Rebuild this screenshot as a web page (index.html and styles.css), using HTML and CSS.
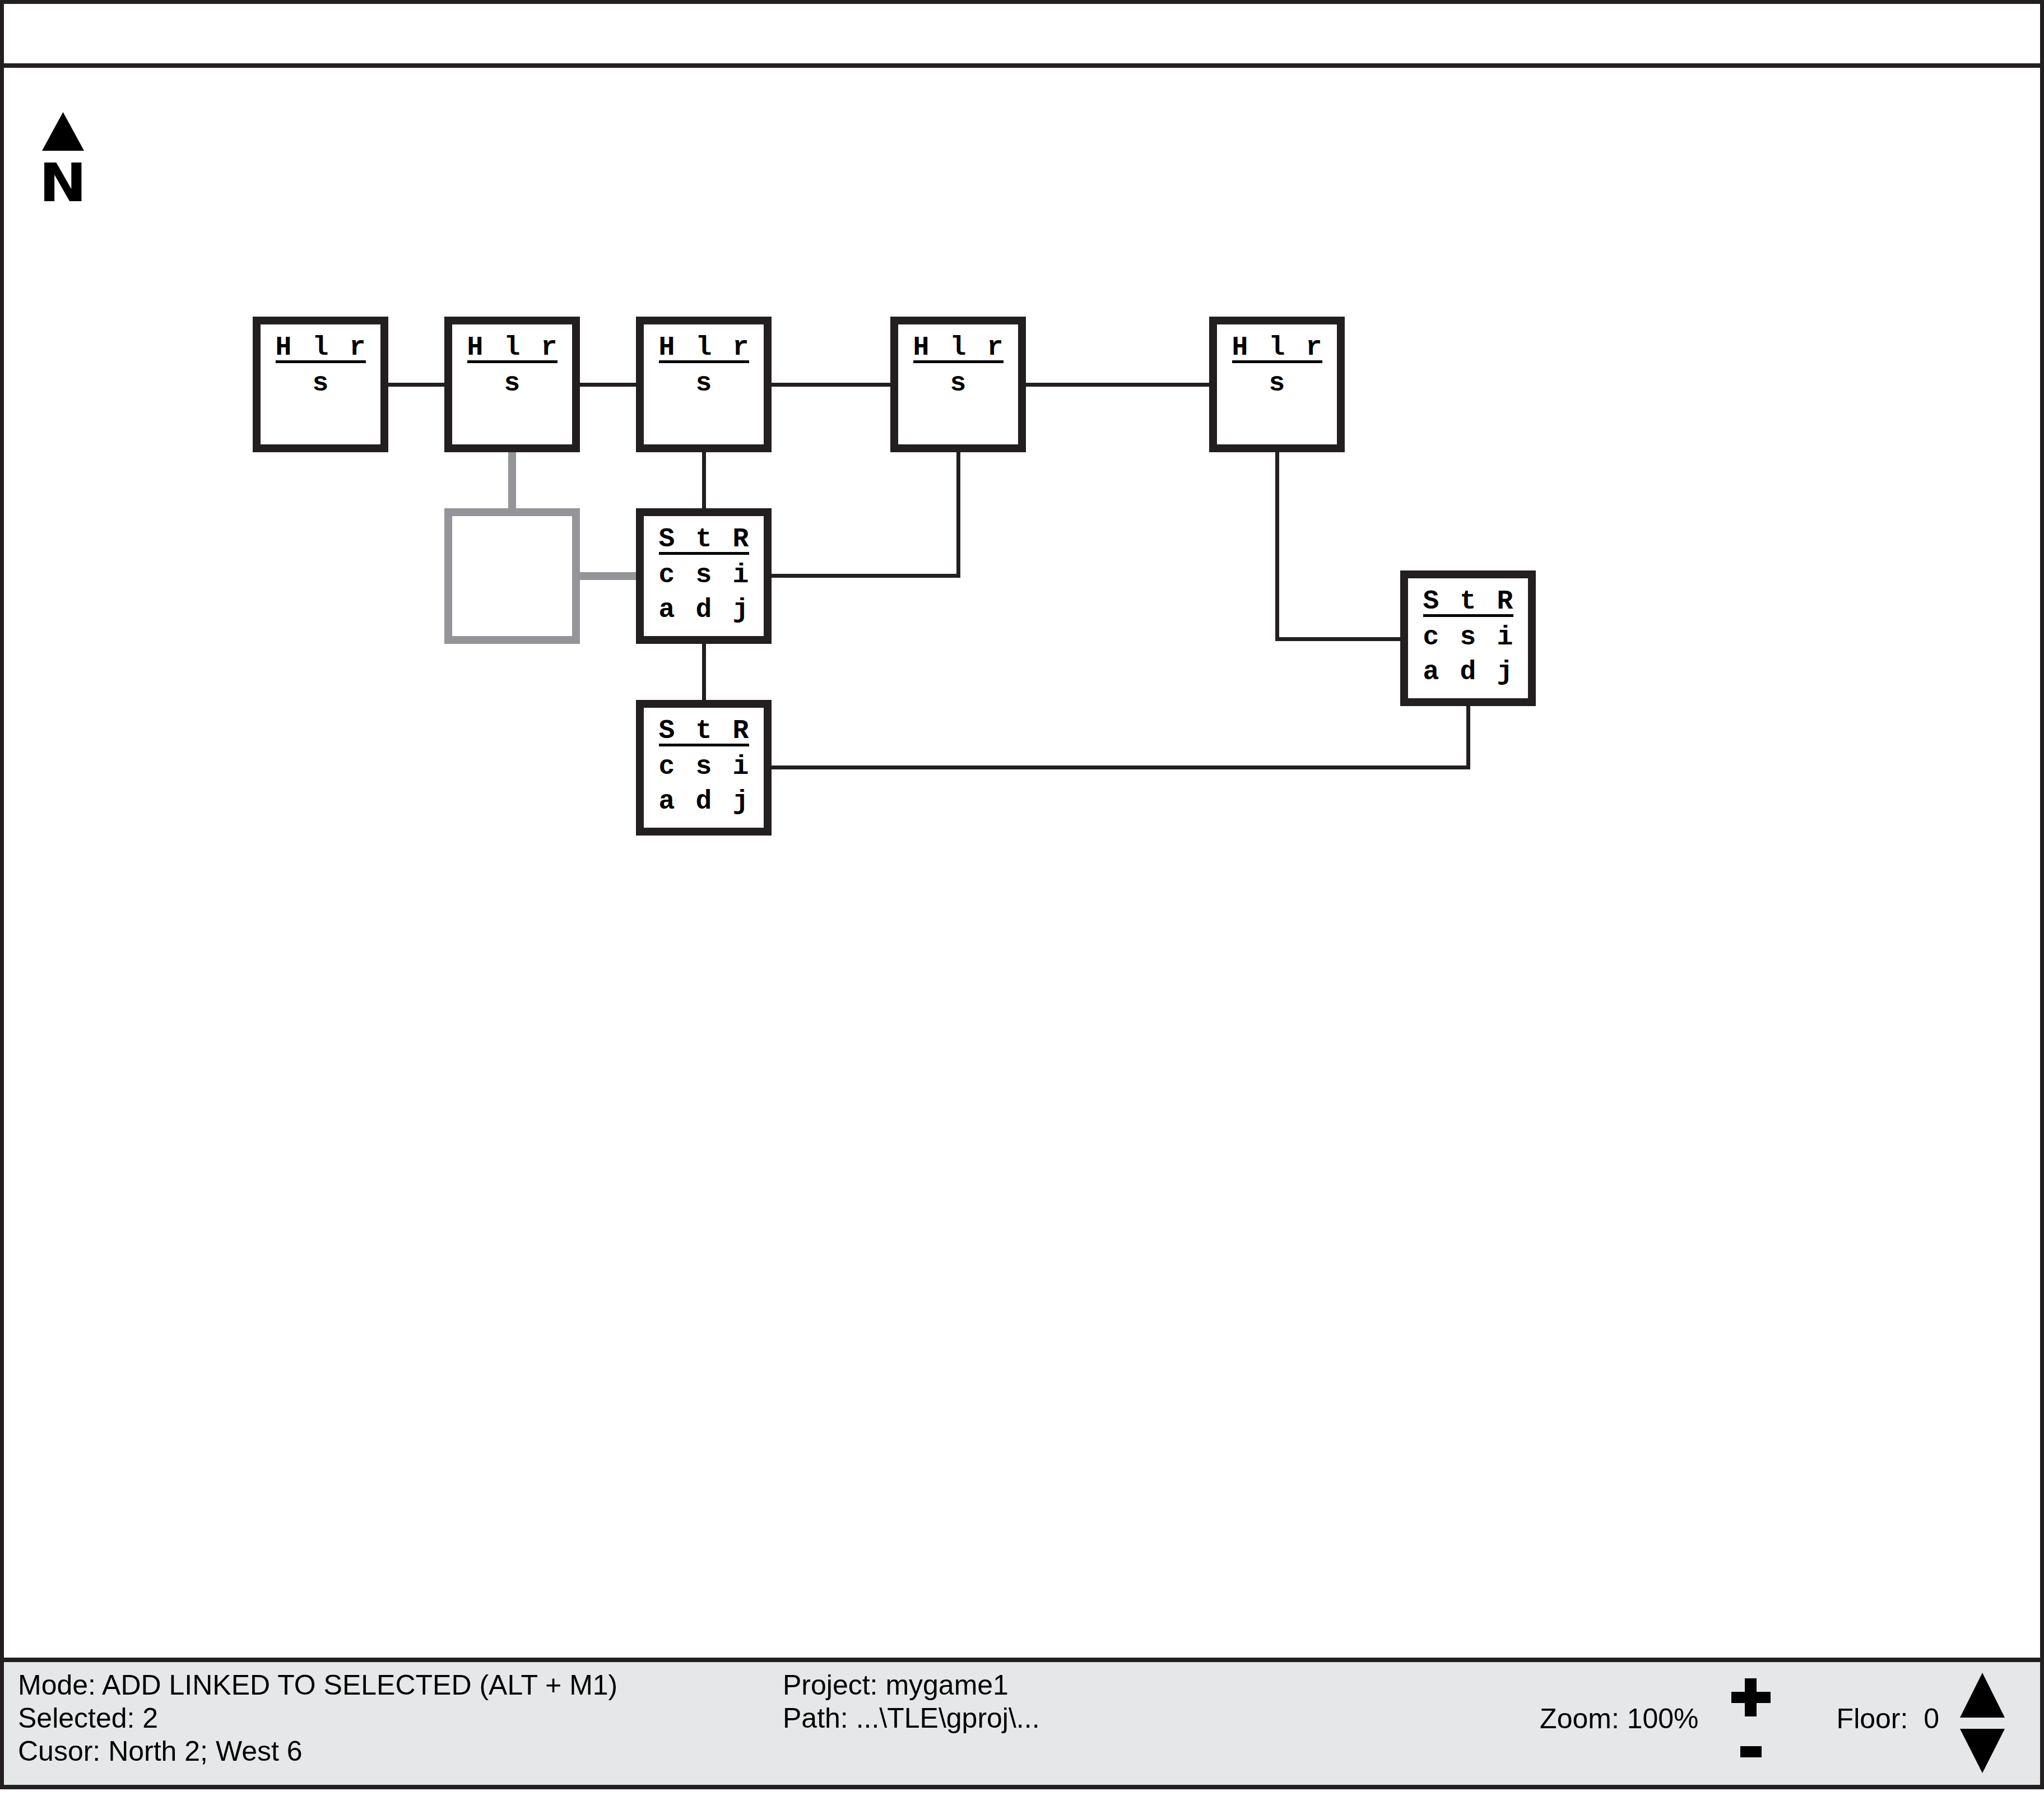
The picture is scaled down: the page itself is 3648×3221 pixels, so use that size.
FILE: index.html
```html
<!DOCTYPE html>
<html>
<head>
<meta charset="utf-8">
<title>Map editor</title>
<link rel="stylesheet" href="styles.css">
</head>
<body>
<div class="frame">
  <header class="topbar"></header>
  <main class="canvas">
    <div class="compass">
      <svg class="compass-arrow" width="75" height="69" viewBox="0 0 75 69"><polygon points="37.5,0 75,69 0,69"/></svg>
      <div class="compass-n">N</div>
    </div>

    <svg class="links" viewBox="0 0 3634 2837" preserveAspectRatio="none">
      <g class="link">
        <path d="M686 565.5H786"/>
        <path d="M1028 565.5H1128"/>
        <path d="M1370 565.5H1582"/>
        <path d="M1824 565.5H2151"/>
        <path d="M1249.5 686V786"/>
        <path d="M1370 906.5H1703.5V686"/>
        <path d="M2272.5 686V1019.5H2492"/>
        <path d="M1249.5 1028V1128"/>
        <path d="M1370 1248.5H2613.5V1139"/>
      </g>
      <g class="link link-ghost">
        <path d="M907 686V786"/>
        <path d="M1028 907H1128"/>
      </g>
    </svg>

    <div class="node" style="left:444px;top:444px">
      <div class="node-head"><span>H</span><span>l</span><span>r</span></div>
      <div class="node-row"><span></span><span>s</span><span></span></div>
    </div>
    <div class="node" style="left:786px;top:444px">
      <div class="node-head"><span>H</span><span>l</span><span>r</span></div>
      <div class="node-row"><span></span><span>s</span><span></span></div>
    </div>
    <div class="node" style="left:1128px;top:444px">
      <div class="node-head"><span>H</span><span>l</span><span>r</span></div>
      <div class="node-row"><span></span><span>s</span><span></span></div>
    </div>
    <div class="node" style="left:1582px;top:444px">
      <div class="node-head"><span>H</span><span>l</span><span>r</span></div>
      <div class="node-row"><span></span><span>s</span><span></span></div>
    </div>
    <div class="node" style="left:2151px;top:444px">
      <div class="node-head"><span>H</span><span>l</span><span>r</span></div>
      <div class="node-row"><span></span><span>s</span><span></span></div>
    </div>

    <div class="node node-ghost" style="left:786px;top:786px"></div>

    <div class="node" style="left:1128px;top:786px">
      <div class="node-head"><span>S</span><span>t</span><span>R</span></div>
      <div class="node-row"><span>c</span><span>s</span><span>i</span></div>
      <div class="node-row"><span>a</span><span>d</span><span>j</span></div>
    </div>
    <div class="node" style="left:1128px;top:1128px">
      <div class="node-head"><span>S</span><span>t</span><span>R</span></div>
      <div class="node-row"><span>c</span><span>s</span><span>i</span></div>
      <div class="node-row"><span>a</span><span>d</span><span>j</span></div>
    </div>
    <div class="node" style="left:2492px;top:897px">
      <div class="node-head"><span>S</span><span>t</span><span>R</span></div>
      <div class="node-row"><span>c</span><span>s</span><span>i</span></div>
      <div class="node-row"><span>a</span><span>d</span><span>j</span></div>
    </div>
  </main>

  <footer class="status">
    <div class="status-info">
      <div>Mode: ADD LINKED TO SELECTED (ALT + M1)</div>
      <div>Selected: 2</div>
      <div>Cusor: North 2; West 6</div>
    </div>
    <div class="status-project">
      <div>Project: mygame1</div>
      <div>Path: ...\TLE\gproj\...</div>
    </div>
    <div class="status-label status-zoom">Zoom: 100%</div>
    <div class="zoom-ctrl">
      <svg class="zoom-in" width="70" height="68" viewBox="0 0 70 68"><path d="M24 0H45V24H70V44H45V68H24V44H0V24H24Z"/></svg>
      <svg class="zoom-out" width="38" height="20" viewBox="0 0 38 20"><rect width="38" height="20"/></svg>
    </div>
    <div class="status-label status-floor">Floor:&nbsp; 0</div>
    <div class="floor-ctrl">
      <svg width="80" height="80" viewBox="0 0 80 80"><polygon points="40,0 80,80 0,80"/></svg>
      <svg width="80" height="79" viewBox="0 0 80 79"><polygon points="0,0 80,0 40,79"/></svg>
    </div>
  </footer>
</div>
</body>
</html>
```

FILE: styles.css
```css
* {
  box-sizing: border-box;
}

html, body {
  margin: 0;
  padding: 0;
  background: #ffffff;
}

body {
  font-family: "Liberation Sans", Arial, sans-serif;
  color: #000;
}

.frame {
  width: 3648px;
  height: 3193px;
  display: flex;
  flex-direction: column;
  border-style: solid;
  border-color: #231f20;
  border-width: 7px 7px 8px 7px;
  background: #fff;
}

.topbar {
  height: 114px;
  flex: none;
  border-bottom: 8px solid #231f20;
  background: #fff;
}

.canvas {
  position: relative;
  flex: 1;
  overflow: hidden;
  background: #fff;
}

/* compass */
.compass {
  position: absolute;
  left: 66px;
  top: 79px;
  display: flex;
  flex-direction: column;
  align-items: center;
}

.compass-arrow {
  display: block;
  fill: #000;
}

.compass-n {
  margin-top: 11px;
  font-family: "DejaVu Sans", sans-serif;
  font-weight: bold;
  font-size: 94px;
  line-height: 94px;
  color: #000;
  transform: scaleX(1.08);
}

/* links */
.links {
  position: absolute;
  left: 0;
  top: 0;
  width: 3634px;
  height: 2837px;
}

.link path {
  fill: none;
  stroke: #231f20;
  stroke-width: 7;
  stroke-linejoin: miter;
  stroke-linecap: butt;
}

.link-ghost path {
  stroke: #939598;
  stroke-width: 14;
}

/* nodes */
.node {
  position: absolute;
  width: 242px;
  height: 242px;
  border: 14px solid #231f20;
  background: #fff;
  padding-top: 18px;
  font-family: "Liberation Mono", "Courier New", monospace;
  font-weight: bold;
  font-size: 48px;
  color: #000;
}

.node-ghost {
  border-color: #939598;
}

.node-head {
  display: grid;
  grid-template-columns: repeat(3, 66px);
  justify-content: center;
  width: 161px;
  margin: 0 auto;
  line-height: 46px;
  border-bottom: 5px solid #000;
  text-align: center;
}

.node-row {
  display: grid;
  grid-template-columns: repeat(3, 66px);
  justify-content: center;
  line-height: 62px;
  text-align: center;
}

.node-head + .node-row {
  margin-top: 5px;
}

/* status bar */
.status {
  flex: none;
  height: 227px;
  border-top: 8px solid #231f20;
  background: #e6e7e8;
  display: flex;
  align-items: flex-start;
  padding: 12px 63px 0 25px;
  font-size: 50px;
  line-height: 59px;
  white-space: nowrap;
}

.status-info {
  width: 1365px;
  flex: none;
}

.status-project {
  flex: 1;
}

.status-label {
  margin-top: 60px;
}

.zoom-ctrl {
  margin-left: 58px;
  margin-top: 17px;
  width: 70px;
  display: flex;
  flex-direction: column;
  align-items: center;
  gap: 53px;
}

.zoom-ctrl svg,
.floor-ctrl svg {
  display: block;
  fill: #000;
}

.status-floor {
  margin-left: 118px;
}

.floor-ctrl {
  margin-left: 37px;
  margin-top: 7px;
  display: flex;
  flex-direction: column;
  gap: 20px;
}
```
